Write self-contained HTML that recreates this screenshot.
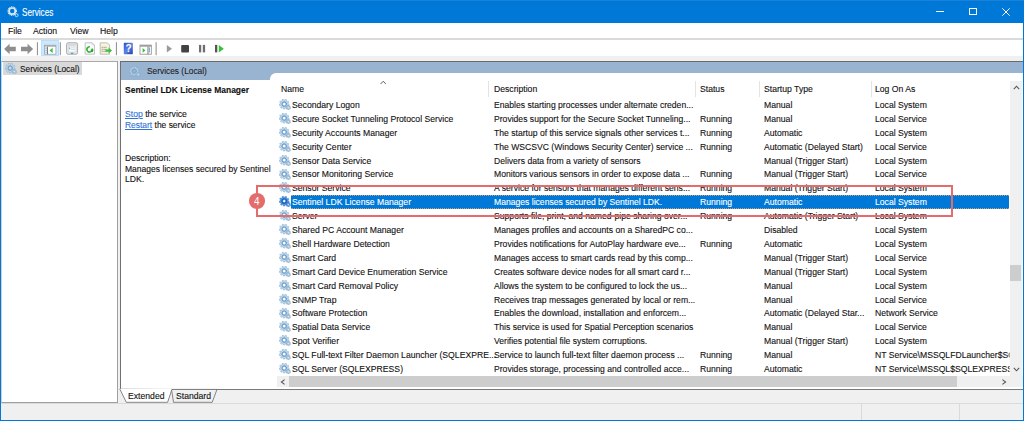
<!DOCTYPE html>
<html><head><meta charset="utf-8">
<style>
*{box-sizing:border-box;margin:0;padding:0}
html,body{width:1024px;height:421px;overflow:hidden;background:#f0f0f0;font-family:"Liberation Sans",sans-serif;color:#000}
.a{position:absolute}
.t{position:absolute;display:inline-block;white-space:nowrap;font-size:9.6px;line-height:9.6px;margin-top:-0.51px;transform:scaleX(0.9);transform-origin:0 0;color:#111;-webkit-text-stroke:0.12px currentColor}
#title{left:0;top:0;width:1024px;height:22.8px;background:#0078d7}
#menu{left:1px;top:22.8px;width:1022px;height:15.6px;background:#fff}
#sep1{left:1px;top:38.4px;width:1022px;height:1.2px;background:#dadada}
#tool{left:1px;top:39.6px;width:1022px;height:16px;background:#fff}
#leftp{left:1px;top:61px;width:117px;height:341.5px;background:#fff;border-left:1.2px solid #d0d0d0;border-top:1px solid #a8a8a8;border-right:1px solid #a0a0a0;border-bottom:1px solid #a0a0a0}
#rightp{left:120px;top:61px;width:903px;height:328.5px;background:#fff;border-left:1.6px solid #707070;border-top:1px solid #6a6a6a;border-bottom:1.2px solid #7a7a7a}
#hdrband{left:121.4px;top:62px;width:901.6px;height:18px;background:#99b4d1}
#list{left:269.5px;top:73.2px;width:753.5px;height:200px;background:#fff;border-top-left-radius:6px}
.row{position:absolute;left:0;width:1024px;height:13.9px}
.cn{left:291.8px}.cd{left:493.8px}.cs{left:699.8px}.ct{left:764px}.cl{left:875px}
.ic{position:absolute;left:278.8px;top:-1.4px}
.sel::before{content:"";position:absolute;left:290.8px;top:-2.45px;width:718.2px;height:13.5px;box-sizing:border-box;background:#0078d7;border-top:1px dotted #b8a080;border-bottom:1px dotted #b8a080}
.sel .t{color:#fff}
.vs{position:absolute;top:80.8px;width:1px;height:16.6px;background:#e3e3e3}
#rows{left:0;top:0;width:1024px;height:421px;clip-path:polygon(270px 97px,1009.6px 97px,1009.6px 375.6px,270px 375.6px)}
#vscroll{left:1009.6px;top:80.8px;width:12.4px;height:294.8px;background:#f0f0f0}
#hscroll{left:276.6px;top:375.8px;width:746px;height:11.2px;background:#f0f0f0}
#thumb{left:289px;top:375.8px;width:668.3px;height:11.2px;background:#cdcdcd}
#status{left:1px;top:403.2px;width:1022px;height:17px;background:#f0f0f0;border-top:1px solid #dadada}
a{color:#2f72d6;text-decoration:underline;-webkit-text-stroke:0.12px #2f72d6}
#redbox{left:256.1px;top:184.9px;width:696.7px;height:32.3px;border:2.8px solid #e46c6c}
#badge{left:249.2px;top:193.4px;width:15.6px;height:15.4px;border-radius:50%;background:#e46c6c}
</style></head><body>
<svg width="0" height="0" style="position:absolute">
 <defs>
  <symbol id="gear" viewBox="0 0 12 11">
   <path d="M9.20 5.06 L10.19 5.44 L9.93 6.73 L8.87 6.69 L8.29 7.64 L8.81 8.56 L7.77 9.39 L6.99 8.68 L5.93 9.03 L5.73 10.07 L4.41 10.04 L4.27 8.99 L3.23 8.58 L2.41 9.25 L1.42 8.38 L1.99 7.48 L1.45 6.50 L0.40 6.49 L0.20 5.18 L1.21 4.86 L1.43 3.77 L0.63 3.08 L1.32 1.95 L2.30 2.35 L3.17 1.65 L3.00 0.61 L4.25 0.19 L4.74 1.13 L5.86 1.15 L6.40 0.25 L7.63 0.73 L7.41 1.76 L8.24 2.50 L9.24 2.15 L9.87 3.31 L9.03 3.96Z M6.9 5.1 A1.7 1.7 0 1 0 3.5 5.1 A1.7 1.7 0 1 0 6.9 5.1Z" fill-rule="evenodd" fill="#b8daf0" stroke="#7fa3c8" stroke-width="0.45"/>
   <circle cx="5.2" cy="5.1" r="2.25" fill="none" stroke="#6d94c0" stroke-width="1"/>
   <path d="M11.00 8.58 L11.69 8.84 L11.41 9.75 L10.69 9.58 L10.17 10.06 L10.28 10.79 L9.36 11.00 L9.15 10.29 L8.47 10.08 L7.90 10.55 L7.25 9.85 L7.76 9.31 L7.60 8.62 L6.91 8.36 L7.19 7.45 L7.91 7.62 L8.43 7.14 L8.32 6.41 L9.24 6.20 L9.45 6.91 L10.13 7.12 L10.70 6.65 L11.35 7.35 L10.84 7.89Z" fill="#a6c6e0" stroke="#7fa3c8" stroke-width="0.4"/>
   <circle cx="9.3" cy="8.6" r="0.7" fill="#e8f0f8"/>
  </symbol>
  <symbol id="gearsel" viewBox="0 0 12 11">
   <path d="M9.20 5.06 L10.19 5.44 L9.93 6.73 L8.87 6.69 L8.29 7.64 L8.81 8.56 L7.77 9.39 L6.99 8.68 L5.93 9.03 L5.73 10.07 L4.41 10.04 L4.27 8.99 L3.23 8.58 L2.41 9.25 L1.42 8.38 L1.99 7.48 L1.45 6.50 L0.40 6.49 L0.20 5.18 L1.21 4.86 L1.43 3.77 L0.63 3.08 L1.32 1.95 L2.30 2.35 L3.17 1.65 L3.00 0.61 L4.25 0.19 L4.74 1.13 L5.86 1.15 L6.40 0.25 L7.63 0.73 L7.41 1.76 L8.24 2.50 L9.24 2.15 L9.87 3.31 L9.03 3.96Z M6.7 5.1 A1.5 1.5 0 1 0 3.7 5.1 A1.5 1.5 0 1 0 6.7 5.1Z" fill-rule="evenodd" fill="#4f9be6" stroke="#2d6fc0" stroke-width="0.45"/>
   <circle cx="5.2" cy="5.1" r="2.3" fill="none" stroke="#1f5fb0" stroke-width="1.1"/>
   <path d="M11.00 8.58 L11.69 8.84 L11.41 9.75 L10.69 9.58 L10.17 10.06 L10.28 10.79 L9.36 11.00 L9.15 10.29 L8.47 10.08 L7.90 10.55 L7.25 9.85 L7.76 9.31 L7.60 8.62 L6.91 8.36 L7.19 7.45 L7.91 7.62 L8.43 7.14 L8.32 6.41 L9.24 6.20 L9.45 6.91 L10.13 7.12 L10.70 6.65 L11.35 7.35 L10.84 7.89Z" fill="#5a9de0" stroke="#2d6fc0" stroke-width="0.4"/>
   <circle cx="9.3" cy="8.6" r="0.7" fill="#e8f0f8"/>
  </symbol>
  </defs>
</svg>

<div id="title" class="a">
  <svg class="a" style="left:6.6px;top:5.8px" width="12" height="12" viewBox="0 0 12 12">
   <circle cx="5.2" cy="5.1" r="4.2" fill="none" stroke="#e6f0fa" stroke-width="1.2" stroke-dasharray="0.9 0.75"/>
   <circle cx="5.2" cy="5.1" r="3.1" fill="none" stroke="#dce9f6" stroke-width="1.7"/>
   <circle cx="9.6" cy="9.2" r="1.45" fill="#0078d7" stroke="#cfe0f2" stroke-width="0.95"/></svg>
  <span class="t" style="left:21.8px;top:8px;color:#fff;font-size:10.2px;line-height:10.2px;transform:scaleX(0.80)">Services</span>
  <div class="a" style="left:936.3px;top:10.9px;width:7.4px;height:1px;background:#fff"></div>
  <div class="a" style="left:969px;top:7.6px;width:7.8px;height:7.6px;border:1px solid #fff"></div>
  <svg class="a" style="left:1002.4px;top:7.5px" width="8" height="8" viewBox="0 0 8 8"><path d="M0.3 0.3L7.7 7.7M7.7 0.3L0.3 7.7" stroke="#fff" stroke-width="1"/></svg>
</div>
<div class="a" style="left:0;top:0;width:1024px;height:1px;background:#1b82d8"></div>

<div id="menu" class="a">
 <span class="t" style="left:7px;top:4.1px">File</span>
 <span class="t" style="left:32px;top:4.1px">Action</span>
 <span class="t" style="left:69px;top:4.1px">View</span>
 <span class="t" style="left:99px;top:4.1px">Help</span>
</div>
<div id="sep1" class="a"></div>
<div id="tool" class="a">
 <svg class="a" style="left:-1px;top:0" width="240" height="16" viewBox="0 39.6 240 16">
  <!-- back arrow -->
  <path d="M4.1 48.5 L9.6 43.3 L9.6 46.4 L15.8 46.4 L15.8 50.8 L9.6 50.8 L9.6 53.8 Z" fill="#8e8e8e"/>
  <!-- forward arrow -->
  <path d="M33.1 48.5 L27.6 43.3 L27.6 46.4 L21 46.4 L21 50.8 L27.6 50.8 L27.6 53.8 Z" fill="#8e8e8e"/>
  <rect x="36.9" y="41.8" width="1" height="13" fill="#8a8a8a"/>
  <!-- highlighted button -->
  <rect x="41.6" y="40" width="17" height="15.6" fill="#cce8ff" stroke="#99d1ff" stroke-width="0.6"/>
  <rect x="44.6" y="44.8" width="11.3" height="9" fill="#fff" stroke="#9a9a9a" stroke-width="0.7"/>
  <rect x="44.6" y="44.8" width="11.3" height="1.5" fill="#a8a8a8"/>
  <rect x="45" y="46.3" width="2.2" height="7.2" fill="#d8e6f2"/>
  <rect x="45.6" y="47.5" width="1" height="0.6" fill="#6a9ad0"/><rect x="45.6" y="49.5" width="1" height="0.6" fill="#6a9ad0"/><rect x="45.6" y="51.5" width="1" height="0.6" fill="#6a9ad0"/>
  <rect x="47.2" y="46.3" width="0.8" height="7.5" fill="#606060"/>
  <path d="M49.6 50 L52.6 47.4 L52.6 52.6Z" fill="#3dbb3d"/>
  <rect x="59.8" y="41.8" width="1" height="13" fill="#8a8a8a"/>
  <!-- properties -->
  <rect x="66.6" y="42.4" width="11" height="11.4" rx="1.5" fill="#ececec" stroke="#a0a0a0" stroke-width="0.9"/>
  <rect x="68.2" y="44.2" width="7.8" height="7.4" fill="#fbfbfb" stroke="#c4c4c4" stroke-width="0.5"/>
  <rect x="68.8" y="45" width="6.6" height="0.9" fill="#b8c4d0"/>
  <rect x="69" y="47" width="1.2" height="2" fill="#5ec8f0"/>
  <rect x="71" y="47.2" width="4" height="0.6" fill="#c8c8c8"/><rect x="71" y="49" width="4" height="0.6" fill="#c8c8c8"/>
  <rect x="70.8" y="52.3" width="2.5" height="1.2" fill="#2aa6e0"/>
  <!-- refresh -->
  <path d="M85.2 42.4 L92.2 42.4 L94.4 44.6 L94.4 53.8 L85.2 53.8Z" fill="#fff" stroke="#b0b0b0" stroke-width="0.8"/>
  <path d="M92.2 42.4 L92.2 44.6 L94.4 44.6" fill="#e8e8e8" stroke="#b8b8b8" stroke-width="0.5"/>
  <circle cx="89.5" cy="49" r="2.6" fill="none" stroke="#34b534" stroke-width="1.6" stroke-dasharray="13.2 3.2" transform="rotate(-20 89.5 49)"/>
  <path d="M90.6 49.4 L93.8 49.4 L92.2 52Z" fill="#2a9d2a"/>
  <!-- export -->
  <path d="M100.2 42.4 L107.4 42.4 L109.6 44.6 L109.6 53.8 L100.2 53.8Z" fill="#f7f2d8" stroke="#b0b0b0" stroke-width="0.8"/>
  <rect x="101.7" y="46.4" width="0.9" height="0.9" fill="#666"/><rect x="103.3" y="46.5" width="3.4" height="0.7" fill="#8a8fa0"/>
  <rect x="101.7" y="48.4" width="0.9" height="0.9" fill="#666"/><rect x="103.3" y="48.5" width="3.4" height="0.7" fill="#8a8fa0"/>
  <rect x="101.7" y="50.4" width="0.9" height="0.9" fill="#666"/><rect x="103.3" y="50.5" width="3.4" height="0.7" fill="#8a8fa0"/>
  <path d="M105.6 49 L108.6 49 L108.6 47.2 L112 50.2 L108.6 53.2 L108.6 51.4 L105.6 51.4Z" fill="#3cc03c"/>
  <rect x="115.9" y="41.8" width="1" height="13" fill="#8a8a8a"/>
  <!-- help -->
  <defs><linearGradient id="hg" x1="0" y1="0" x2="1" y2="1"><stop offset="0" stop-color="#2b4cc4"/><stop offset="0.5" stop-color="#5b83e8"/><stop offset="1" stop-color="#1f3ea8"/></linearGradient></defs>
  <rect x="123.8" y="42.4" width="9" height="11.4" rx="0.6" fill="url(#hg)"/>
  <text x="125.6" y="52" font-family="Liberation Sans" font-size="10" font-weight="bold" fill="#fff">?</text>
  <!-- action pane -->
  <rect x="140" y="44.7" width="11.3" height="9.1" fill="#fff" stroke="#8c8c8c" stroke-width="0.8"/>
  <rect x="140" y="44.7" width="11.3" height="1.6" fill="#9a9a9a"/>
  <rect x="147.6" y="46.3" width="0.8" height="7.5" fill="#555"/>
  <path d="M142.6 47.6 L145.4 50 L142.6 52.4Z" fill="#3dbb3d"/>
  <rect x="149.2" y="47" width="0.8" height="5" fill="#4aa0e0"/>
  <rect x="155.6" y="41.8" width="1" height="13" fill="#8a8a8a"/>
  <!-- play -->
  <path d="M166.8 44.5 L172 48.25 L166.8 52Z" fill="#9a9a9a"/>
  <!-- stop -->
  <rect x="181.2" y="44.5" width="7.8" height="7.5" rx="1" fill="#424242"/>
  <!-- pause -->
  <rect x="199" y="44.5" width="2.2" height="7.5" fill="#6e6e6e"/>
  <rect x="202.8" y="44.5" width="2.3" height="7.5" fill="#6e6e6e"/>
  <!-- restart -->
  <rect x="215" y="44.5" width="2.3" height="7.5" fill="#555"/>
  <path d="M218.8 44.5 L223.8 48.25 L218.8 52Z" fill="#34c234"/>
 </svg>
</div>

<div id="leftp" class="a"></div>
<div class="a" style="left:3px;top:62.4px;width:79.2px;height:12.7px;background:#d9d9d9"></div>
<svg class="a" style="left:4.6px;top:63.2px" width="12" height="11"><use href="#gear"/></svg>
<span class="t" style="left:19.6px;top:64.4px;transform:scaleX(0.865)">Services (Local)</span>

<div id="rightp" class="a"></div>
<div id="hdrband" class="a"></div>
<svg class="a" style="left:129.2px;top:66px;opacity:.75" width="12" height="11"><use href="#gear"/></svg>
<span class="t" style="left:147px;top:66.8px;color:#222;transform:scaleX(0.871)">Services (Local)</span>
<div id="list" class="a"></div>

<span class="t" style="left:125.2px;top:85.4px;font-weight:bold;transform:scaleX(0.885)">Sentinel LDK License Manager</span>
<span class="t" style="left:125.2px;top:109.5px"><a>Stop</a> the service</span>
<span class="t" style="left:125.2px;top:120.7px;transform:scaleX(0.88)"><a>Restart</a> the service</span>
<span class="t" style="left:125.2px;top:153.4px">Description:</span>
<span class="t" style="left:125.2px;top:164.4px;transform:scaleX(0.89)">Manages licenses secured by Sentinel</span>
<span class="t" style="left:125.2px;top:174.8px">LDK.</span>

<span class="t" style="left:280.6px;top:84.4px">Name</span>
<svg class="a" style="left:379.6px;top:80px" width="7" height="5"><path d="M0.6 3.9 L3.2 1.3 L5.8 3.9" fill="none" stroke="#555" stroke-width="1"/></svg>
<div class="vs" style="left:488.2px"></div>
<span class="t" style="left:494.1px;top:84.4px">Description</span>
<div class="vs" style="left:694.9px"></div>
<span class="t" style="left:699.8px;top:84.4px">Status</span>
<div class="vs" style="left:759.4px"></div>
<span class="t" style="left:764.1px;top:84.4px">Startup Type</span>
<div class="vs" style="left:870.6px"></div>
<span class="t" style="left:875px;top:84.4px">Log On As</span>

<div id="rows" class="a">
<div class="row" style="top:100.43px"><svg class="ic" width="12" height="11"><use href="#gear"/></svg><span class="t cn" style="transform:scaleX(0.9000)">Secondary Logon</span><span class="t cd" style="transform:scaleX(0.8964)">Enables starting processes under alternate creden...</span><span class="t cs"></span><span class="t ct">Manual</span><span class="t cl">Local System</span></div>
<div class="row" style="top:114.33px"><svg class="ic" width="12" height="11"><use href="#gear"/></svg><span class="t cn" style="transform:scaleX(0.9000)">Secure Socket Tunneling Protocol Service</span><span class="t cd" style="transform:scaleX(0.8963)">Provides support for the Secure Socket Tunneling...</span><span class="t cs">Running</span><span class="t ct">Manual</span><span class="t cl">Local Service</span></div>
<div class="row" style="top:128.23px"><svg class="ic" width="12" height="11"><use href="#gear"/></svg><span class="t cn" style="transform:scaleX(0.9000)">Security Accounts Manager</span><span class="t cd" style="transform:scaleX(0.8963)">The startup of this service signals other services t...</span><span class="t cs">Running</span><span class="t ct">Automatic</span><span class="t cl">Local System</span></div>
<div class="row" style="top:142.13px"><svg class="ic" width="12" height="11"><use href="#gear"/></svg><span class="t cn" style="transform:scaleX(0.9000)">Security Center</span><span class="t cd" style="transform:scaleX(0.8963)">The WSCSVC (Windows Security Center) service ...</span><span class="t cs">Running</span><span class="t ct">Automatic (Delayed Start)</span><span class="t cl">Local Service</span></div>
<div class="row" style="top:156.03px"><svg class="ic" width="12" height="11"><use href="#gear"/></svg><span class="t cn" style="transform:scaleX(0.9000)">Sensor Data Service</span><span class="t cd" style="transform:scaleX(0.8951)">Delivers data from a variety of sensors</span><span class="t cs"></span><span class="t ct">Manual (Trigger Start)</span><span class="t cl">Local System</span></div>
<div class="row" style="top:169.93px"><svg class="ic" width="12" height="11"><use href="#gear"/></svg><span class="t cn" style="transform:scaleX(0.9000)">Sensor Monitoring Service</span><span class="t cd" style="transform:scaleX(0.8964)">Monitors various sensors in order to expose data ...</span><span class="t cs">Running</span><span class="t ct">Manual (Trigger Start)</span><span class="t cl">Local Service</span></div>
<div class="row" style="top:183.83px"><svg class="ic" width="12" height="11"><use href="#gear"/></svg><span class="t cn" style="transform:scaleX(0.9000)">Sensor Service</span><span class="t cd">A service for sensors that manages different sens...</span><span class="t cs">Running</span><span class="t ct">Manual (Trigger Start)</span><span class="t cl">Local System</span></div>
<div class="row sel" style="top:197.73px"><svg class="ic" width="12" height="11"><use href="#gearsel"/></svg><span class="t cn" style="transform:scaleX(0.9000)">Sentinel LDK License Manager</span><span class="t cd" style="transform:scaleX(0.8956)">Manages licenses secured by Sentinel LDK.</span><span class="t cs">Running</span><span class="t ct">Automatic</span><span class="t cl">Local System</span></div>
<div class="row" style="top:211.63px"><svg class="ic" width="12" height="11"><use href="#gear"/></svg><span class="t cn" style="transform:scaleX(0.8999)">Server</span><span class="t cd">Supports file, print, and named-pipe sharing over...</span><span class="t cs">Running</span><span class="t ct">Automatic (Trigger Start)</span><span class="t cl">Local System</span></div>
<div class="row" style="top:225.53px"><svg class="ic" width="12" height="11"><use href="#gear"/></svg><span class="t cn" style="transform:scaleX(0.9000)">Shared PC Account Manager</span><span class="t cd" style="transform:scaleX(0.8964)">Manages profiles and accounts on a SharedPC co...</span><span class="t cs"></span><span class="t ct">Disabled</span><span class="t cl">Local System</span></div>
<div class="row" style="top:239.43px"><svg class="ic" width="12" height="11"><use href="#gear"/></svg><span class="t cn" style="transform:scaleX(0.9000)">Shell Hardware Detection</span><span class="t cd" style="transform:scaleX(0.8963)">Provides notifications for AutoPlay hardware eve...</span><span class="t cs">Running</span><span class="t ct">Automatic</span><span class="t cl">Local System</span></div>
<div class="row" style="top:253.33px"><svg class="ic" width="12" height="11"><use href="#gear"/></svg><span class="t cn" style="transform:scaleX(0.9000)">Smart Card</span><span class="t cd" style="transform:scaleX(0.8964)">Manages access to smart cards read by this comp...</span><span class="t cs"></span><span class="t ct">Manual (Trigger Start)</span><span class="t cl">Local Service</span></div>
<div class="row" style="top:267.23px"><svg class="ic" width="12" height="11"><use href="#gear"/></svg><span class="t cn" style="transform:scaleX(0.9000)">Smart Card Device Enumeration Service</span><span class="t cd" style="transform:scaleX(0.8963)">Creates software device nodes for all smart card r...</span><span class="t cs"></span><span class="t ct">Manual (Trigger Start)</span><span class="t cl">Local System</span></div>
<div class="row" style="top:281.13px"><svg class="ic" width="12" height="11"><use href="#gear"/></svg><span class="t cn" style="transform:scaleX(0.9000)">Smart Card Removal Policy</span><span class="t cd" style="transform:scaleX(0.8964)">Allows the system to be configured to lock the us...</span><span class="t cs"></span><span class="t ct">Manual</span><span class="t cl">Local System</span></div>
<div class="row" style="top:295.03px"><svg class="ic" width="12" height="11"><use href="#gear"/></svg><span class="t cn" style="transform:scaleX(0.9000)">SNMP Trap</span><span class="t cd" style="transform:scaleX(0.8964)">Receives trap messages generated by local or rem...</span><span class="t cs"></span><span class="t ct">Manual</span><span class="t cl">Local Service</span></div>
<div class="row" style="top:308.93px"><svg class="ic" width="12" height="11"><use href="#gear"/></svg><span class="t cn" style="transform:scaleX(0.9000)">Software Protection</span><span class="t cd" style="transform:scaleX(0.8964)">Enables the download, installation and enforcem...</span><span class="t cs"></span><span class="t ct" style="transform:scaleX(0.9000)">Automatic (Delayed Star...</span><span class="t cl" style="transform:scaleX(0.9000)">Network Service</span></div>
<div class="row" style="top:322.83px"><svg class="ic" width="12" height="11"><use href="#gear"/></svg><span class="t cn" style="transform:scaleX(0.9000)">Spatial Data Service</span><span class="t cd" style="transform:scaleX(0.8963)">This service is used for Spatial Perception scenarios</span><span class="t cs"></span><span class="t ct">Manual</span><span class="t cl">Local Service</span></div>
<div class="row" style="top:336.73px"><svg class="ic" width="12" height="11"><use href="#gear"/></svg><span class="t cn" style="transform:scaleX(0.9000)">Spot Verifier</span><span class="t cd" style="transform:scaleX(0.8954)">Verifies potential file system corruptions.</span><span class="t cs"></span><span class="t ct">Manual (Trigger Start)</span><span class="t cl">Local System</span></div>
<div class="row" style="top:350.63px"><svg class="ic" width="12" height="11"><use href="#gear"/></svg><span class="t cn" style="transform:scaleX(0.9000)">SQL Full-text Filter Daemon Launcher (SQLEXPRE...</span><span class="t cd" style="transform:scaleX(0.8964)">Service to launch full-text filter daemon process ...</span><span class="t cs">Running</span><span class="t ct">Manual</span><span class="t cl" style="transform:scaleX(0.9000)">NT Service\MSSQLFDLauncher$SQ</span></div>
<div class="row" style="top:364.53px"><svg class="ic" width="12" height="11"><use href="#gear"/></svg><span class="t cn" style="transform:scaleX(0.9000)">SQL Server (SQLEXPRESS)</span><span class="t cd" style="transform:scaleX(0.8964)">Provides storage, processing and controlled acce...</span><span class="t cs">Running</span><span class="t ct">Automatic</span><span class="t cl" style="transform:scaleX(0.9000)">NT Service\MSSQL$SQLEXPRESS</span></div>
</div>

<div id="vscroll" class="a"></div>
<svg class="a" style="left:1012.5px;top:84.5px" width="7" height="5"><path d="M0.8 4.2 L3.5 1.2 L6.2 4.2" fill="none" stroke="#555" stroke-width="1.1"/></svg>
<svg class="a" style="left:1012.5px;top:366.5px" width="7" height="5"><path d="M0.8 0.8 L3.5 3.8 L6.2 0.8" fill="none" stroke="#555" stroke-width="1.1"/></svg>
<div class="a" style="left:1010.4px;top:264.9px;width:10.6px;height:15.7px;background:#cdcdcd"></div>
<div id="hscroll" class="a"></div>
<div id="thumb" class="a"></div>
<svg class="a" style="left:280px;top:378.5px" width="6" height="6"><path d="M4.6 0.6 L1.4 3 L4.6 5.4" fill="none" stroke="#555" stroke-width="1.1"/></svg>
<svg class="a" style="left:1000.8px;top:378.8px" width="6" height="6"><path d="M1.4 0.6 L4.6 3 L1.4 5.4" fill="none" stroke="#555" stroke-width="1.1"/></svg>

<!-- tabs -->
<svg class="a" style="left:118px;top:386px" width="110" height="18" viewBox="118 386 110 18">
  <path d="M171.5 389.4 L217 389.4 L212.2 402.3 L173.5 402.3 Z" fill="#f0f0f0" stroke="#6a6a6a" stroke-width="0.8"/>
  <path d="M119.8 389 L171.9 389.4 L167.6 402.3 L126.3 402.3 Z" fill="#fff" stroke="#6a6a6a" stroke-width="0.8"/>
  <rect x="120.5" y="388.6" width="51" height="1.4" fill="#fff"/>
</svg>
<span class="t" style="left:127.7px;top:391.6px">Extended</span>
<span class="t" style="left:175.7px;top:391.6px">Standard</span>

<div id="status" class="a"></div>
<div class="a" style="left:861.4px;top:404px;width:1px;height:16px;background:#dadada"></div>
<div class="a" style="left:958.6px;top:404px;width:1px;height:16px;background:#dadada"></div>

<div id="redbox" class="a"></div>
<div id="badge" class="a"></div>
<span class="t" style="left:254.3px;top:196.7px;margin-top:0;color:#fff;font-size:10.4px;line-height:10.4px;transform:scaleX(0.95);-webkit-text-stroke:0">4</span>

<!-- window border -->
<div class="a" style="left:0;top:22px;width:1px;height:399px;background:#0078d7"></div>
<div class="a" style="left:1023px;top:22px;width:1px;height:399px;background:#0078d7"></div>
<div class="a" style="left:0;top:420px;width:1024px;height:1px;background:#0078d7"></div>
</body></html>
